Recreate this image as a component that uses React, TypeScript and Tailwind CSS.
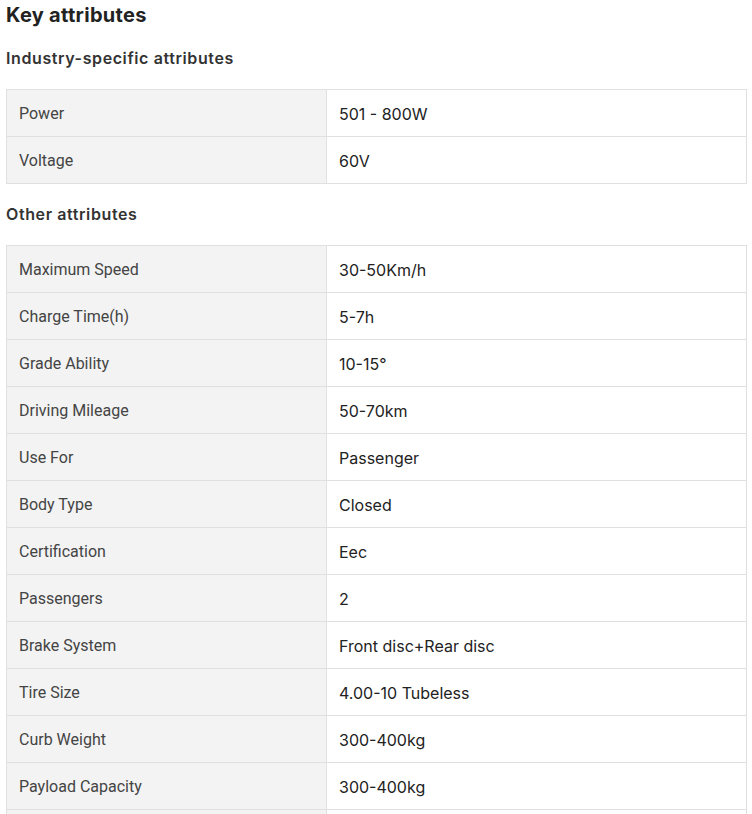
const industry: [string, string][] = [
  ["Power", "501 - 800W"],
  ["Voltage", "60V"],
]

const other: [string, string][] = [
  ["Maximum Speed", "30-50Km/h"],
  ["Charge Time(h)", "5-7h"],
  ["Grade Ability", "10-15°"],
  ["Driving Mileage", "50-70km"],
  ["Use For", "Passenger"],
  ["Body Type", "Closed"],
  ["Certification", "Eec"],
  ["Passengers", "2"],
  ["Brake System", "Front disc+Rear disc"],
  ["Tire Size", "4.00-10 Tubeless"],
  ["Curb Weight", "300-400kg"],
  ["Payload Capacity", "300-400kg"],
  ["", ""],
]

function AttrTable({ rows }: { rows: [string, string][] }) {
  return (
    <table className="w-[741px] border-collapse">
      <tbody>
        {rows.map(([k, v], i) => (
          <tr key={i} className="h-[47px]">
            <td className="w-[320px] border border-[#e0e0e0] bg-[#f3f3f3] pl-3 pt-px text-[16px] font-normal text-[#444] font-['Roboto',sans-serif]">
              {k}
            </td>
            <td className="border border-[#e0e0e0] pl-3 pt-px text-[16px] text-[#222] font-['Inter',sans-serif]">
              {v}
            </td>
          </tr>
        ))}
      </tbody>
    </table>
  )
}

export default function App() {
  return (
    <div className="h-[814px] overflow-hidden bg-white pl-[6px] pt-[3px] font-['Inter',sans-serif] text-[#222]">
      <h2 className="text-[20px] font-bold leading-[24px] tracking-[0.3px]">Key attributes</h2>
      <h3 className="mt-[21px] text-[16px] font-semibold leading-[20px] tracking-[0.6px] text-[#333]">
        Industry-specific attributes
      </h3>
      <div className="mt-[21px]">
        <AttrTable rows={industry} />
      </div>
      <h3 className="mt-[20px] text-[16px] font-semibold leading-[20px] tracking-[0.6px] text-[#333]">
        Other attributes
      </h3>
      <div className="mt-[21px]">
        <AttrTable rows={other} />
      </div>
    </div>
  )
}
